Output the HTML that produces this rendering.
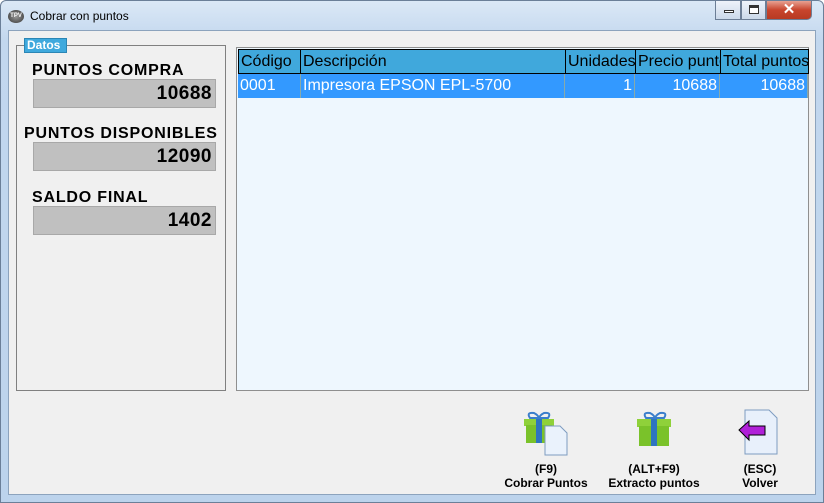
<!DOCTYPE html>
<html><head><meta charset="utf-8"><style>
*{margin:0;padding:0;box-sizing:border-box}
body{width:824px;height:503px;overflow:hidden;font-family:"Liberation Sans",sans-serif;background:#fff}
.win{position:absolute;left:0;top:0;width:824px;height:503px;background:linear-gradient(#dbe8f6,#c2d7ee 40px,#bcd3ec);border:1px solid #6b7f98;border-radius:6px 6px 0 0}
.title{position:absolute;left:29px;top:8px;font-size:12px;color:#000}
.tico{position:absolute;left:7px;top:9px;width:16px;height:13px;border-radius:50%;background:radial-gradient(#999,#333);color:#fff;font-size:6px;font-weight:bold;text-align:center;line-height:13px}
.btns{position:absolute;left:714px;top:0;height:20px;display:flex}
.b{position:relative;width:27px;height:19px;border:1px solid #6c7e96;background:linear-gradient(#eef3fa,#cbd9ea);border-top:none}
.bx{width:46px;background:linear-gradient(#e8a192,#c8452d 50%,#b73a22);border-radius:0 0 5px 0;color:#fff;font-size:15px;font-weight:bold;text-align:center;line-height:18px}
.client{position:absolute;left:8px;top:30px;width:808px;height:465px;background:#f0f0f0;border:1px solid #8ca3bd}
.grp{position:absolute;left:16px;top:45px;width:210px;height:346px;border:1px solid #808080}
.dl{position:absolute;left:24px;top:38px;width:43px;height:15px;background:#3fa9dd;border:1px solid #2b86b5;color:#fff;font-size:12px;font-weight:bold;padding-left:2px;line-height:13px}
.lab{position:absolute;left:32px;font-size:16px;font-weight:bold;letter-spacing:0.8px}
.fld{position:absolute;left:33px;width:183px;height:29px;background:#c0c0c0;border:1px solid #a8a8a8;text-align:right;font-size:19px;font-weight:bold;padding-right:3px;line-height:27px;letter-spacing:0.5px}
.tbl{position:absolute;left:236px;top:47px;width:573px;height:344px;background:#eef7fe;border:1px solid #8f8f8f}
.hd{position:absolute;top:1px;height:25px;background:#40a8dc;border:1px solid #000;font-size:16px;line-height:23px;padding-left:2px;overflow:hidden;white-space:nowrap}
.rw{position:absolute;top:26px;height:24px;background:#3399ff;color:#fff;font-size:16px;line-height:23px;border-right:1px solid #8aa;overflow:hidden;white-space:nowrap;padding:0 2px}
.cap{position:absolute;top:462px;font-size:12px;font-weight:bold;text-align:center;line-height:14px;width:120px}
</style></head><body>
<div class="win">
<div class="tico">TPV</div><div class="title">Cobrar con puntos</div>
<div class="btns"><div class="b" style="width:26px"><div style="position:absolute;left:8px;top:9px;width:10px;height:3px;background:#fff;border:1px solid #333"></div></div><div class="b" style="width:25px"><div style="position:absolute;left:7px;top:4px;width:10px;height:9px;background:#fff;border:1px solid #333;border-top-width:3px"></div></div><div class="b bx">✕</div></div>
</div>
<div class="client"></div>
<div class="grp"></div><div class="dl">Datos</div>
<div class="lab" style="top:62px">PUNTOS COMPRA</div><div class="fld" style="top:79px">10688</div>
<div class="lab" style="top:125px;left:24px">PUNTOS DISPONIBLES</div><div class="fld" style="top:142px">12090</div>
<div class="lab" style="top:189px">SALDO FINAL</div><div class="fld" style="top:206px">1402</div>
<div class="tbl">
<div class="hd" style="left:1px;width:63px">Código</div>
<div class="hd" style="left:63px;width:266px">Descripción</div>
<div class="hd" style="left:328px;width:71px">Unidades</div>
<div class="hd" style="left:398px;width:86px">Precio puntos</div>
<div class="hd" style="left:483px;width:89px">Total puntos</div>
<div class="rw" style="left:1px;width:63px">0001</div>
<div class="rw" style="left:64px;width:264px">Impresora EPSON EPL-5700</div>
<div class="rw" style="left:328px;width:70px;text-align:right">1</div>
<div class="rw" style="left:398px;width:85px;text-align:right">10688</div>
<div class="rw" style="left:483px;width:88px;text-align:right">10688</div>
</div>
<svg style="position:absolute;left:520px;top:408px" width="60" height="50">
<path d="M10 10q-4-6 4-5q4 2 5 5q1-3 5-5q8-1 4 5z" fill="none" stroke="#3a7ecb" stroke-width="2"/>
<rect x="4" y="11" width="30" height="7" fill="#8fd13a"/><rect x="6" y="17" width="26" height="18" fill="#7ac22a"/>
<rect x="16" y="11" width="6" height="24" fill="#2e74c0"/>
<path d="M25 18h15l7 7v22h-22z" fill="#eaf2fc" stroke="#7e9cc0"/>
</svg>
<svg style="position:absolute;left:632px;top:410px" width="50" height="46">
<path d="M14 8q-4-6 4-5q4 2 5 5q1-3 5-5q8-1 4 5z" fill="none" stroke="#3a7ecb" stroke-width="2"/>
<rect x="5" y="9" width="34" height="8" fill="#8fd13a"/><rect x="7" y="16" width="30" height="20" fill="#7ac22a"/>
<rect x="19" y="9" width="6" height="27" fill="#2e74c0"/>
</svg>
<svg style="position:absolute;left:735px;top:408px" width="50" height="50">
<path d="M10 2h24l8 8v36h-32z" fill="#e8f0fb" stroke="#7e9cc0"/>
<path d="M4 22l10-9v5h16v9h-16v5z" fill="#b020d8" stroke="#000"/>
</svg>
<div class="cap" style="left:486px">(F9)<br>Cobrar Puntos</div>
<div class="cap" style="left:594px">(ALT+F9)<br>Extracto puntos</div>
<div class="cap" style="left:700px">(ESC)<br>Volver</div>
</body></html>
